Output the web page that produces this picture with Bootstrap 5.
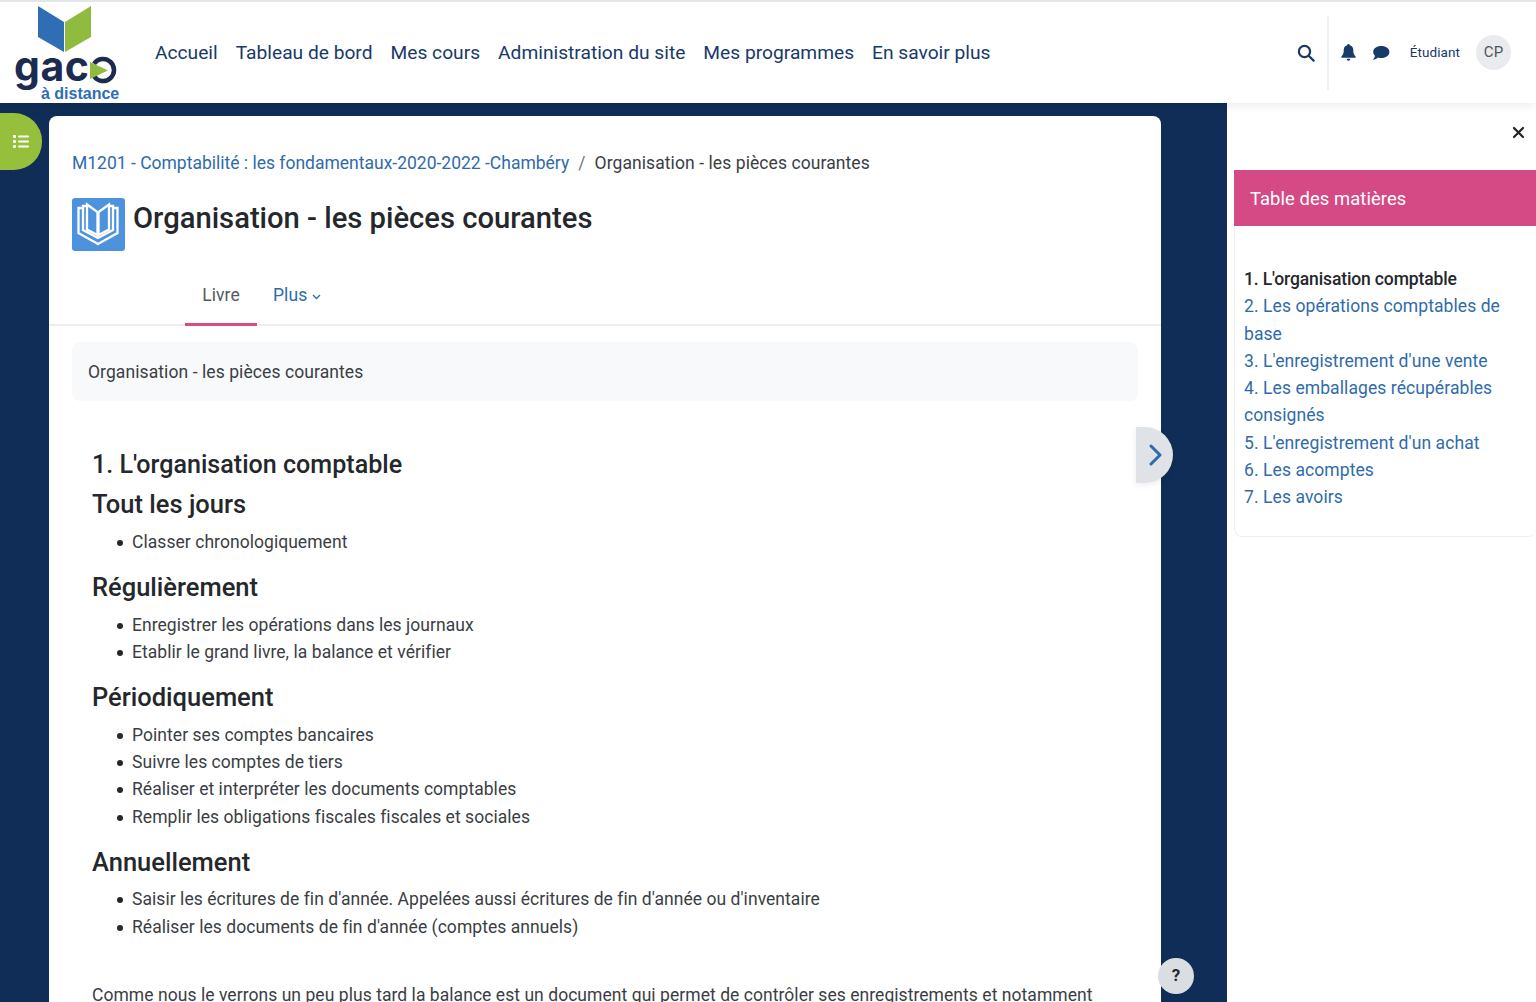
<!DOCTYPE html>
<html lang="fr">
<head>
  <meta charset="UTF-8">
  <meta name="viewport" content="width=device-width, initial-scale=1.0">
  <title>Organisation - les pièces courantes</title>
  <link href="https://cdn.jsdelivr.net/npm/bootstrap@5.3.0/dist/css/bootstrap.min.css" rel="stylesheet">
  <script src="https://cdn.jsdelivr.net/npm/bootstrap@5.3.0/dist/js/bootstrap.bundle.min.js"></script>
  <style>
    html, body { height: 1002px; overflow: hidden; }
    body { font-family: Roboto, "Liberation Sans", sans-serif; font-size: 17.5px; line-height: 27.3px; letter-spacing: .08px; color: #3a3e44; background: #0f2d56; }
    a { text-decoration: none; color: #2f6bab; }
    .top-bar { height: 103px; background: #fff; border-top: 2px solid #e3e5e7; padding-left: 14px; padding-right: 25px; position: relative; z-index: 2; box-shadow: 0 2px 10px rgba(0,0,0,.09); }
    .brand-logo { width: 106px; height: 100px; flex: none; }
    .brand-name { font-family: Inter, sans-serif; font-size: 41px; font-weight: 700; fill: #1b2c50; letter-spacing: .5px; }
    .brand-sub { font-family: "Liberation Sans", sans-serif; font-size: 16px; font-weight: 700; fill: #2f6db5; letter-spacing: 0; }
    .main-links { gap: 18px; margin-left: 35px; margin-top: 1px; letter-spacing: 0; }
    .main-links a { color: #173a69; font-size: 19.2px; white-space: nowrap; }
    .tool-divider { width: 2px; height: 74px; background: #eff0f1; margin: 0 12px 0 12px; }
    .role-label { font-size: 13.5px; color: #173a69; margin-left: 20px; margin-right: 16px; }
    .user-circle { width: 35px; height: 35px; border-radius: 50%; background: #e9ebee; color: #50555b; font-size: 15px; }
    .page-body { height: 899px; position: relative; padding-top: 13px; }
    .course-card { width: 1112px; margin-left: 49px; height: 900px; background: #fff; border-radius: 8px 8px 0 0; overflow: hidden; }
    .crumb-row { padding: 34px 23px 0; }
    .crumb-row a { letter-spacing: 0; }
    .crumb-sep { color: #6c757d; margin: 0 9px; }
    .title-row { padding: 21px 23px 0; gap: 8px; }
    .book-tile { width: 53px; height: 53px; flex: none; }
    .page-title { font-size: 29.2px; font-weight: 500; line-height: 40px; margin: 0; color: #24272b; letter-spacing: 0; }
    .tab-line { margin-top: 25px; padding-left: 136px; height: 50px; border-bottom: 2px solid #eceeef; }
    .tab-item { display: block; padding: 0 16px; height: 50px; line-height: 38px; }
    .tab-active { color: #55595e; border-bottom: 3px solid #d94b87; width: 72px; padding: 0; text-align: center; }
    .chapter-strip { margin: 16px 23px 0; height: 59px; line-height: 61px; padding-left: 16px; background: #f8f9fa; border-radius: 8px; }
    .chapter-body { padding: 44px 43px 0; letter-spacing: .05px; }
    .chapter-title { font-size: 25.100px; font-weight: 500; line-height: 40px; margin: 0; color: #24272b; letter-spacing: 0; }
    .chapter-sub { font-size: 25.500px; font-weight: 500; line-height: 32px; margin: 3px 0 8.500px; color: #24272b; letter-spacing: 0; }
    .chapter-list { list-style: none; margin: 0 0 15px; padding-left: 40px; }
    .chapter-list li { position: relative; }
    .chapter-list li::before { content: ""; position: absolute; left: -15.500px; top: 11px; width: 6px; height: 6px; border-radius: 50%; background: #24272b; }
    .chapter-note { margin-top: 41px; white-space: nowrap; }
    .next-tab { position: absolute; left: 1136px; top: 324px; width: 37px; height: 56px; background: #dfe2e6; border-radius: 0 28px 28px 0; box-shadow: 0 2px 6px rgba(0,0,0,.08); }
    .side-tab { position: absolute; left: 0; top: 10px; width: 42px; height: 57px; background: #96bf3c; border-radius: 0 28px 28px 0; }
    .help-btn { position: absolute; left: 1158px; top: 855px; width: 36px; height: 36px; border-radius: 50%; background: #dadde1; color: #24272b; font-weight: 700; font-size: 17px; }
    .toc-drawer { position: absolute; left: 1227px; top: 0; width: 309px; height: 899px; background: #fff; }
    .close-row { height: 67px; padding: 23px 11px 0 0; }
    .toc-panel { margin-left: 7px; height: 367px; border: 1px solid #eceeef; border-right: 0; border-radius: 0 0 8px 8px; }
    .toc-head { height: 56px; line-height: 58px; padding-left: 16px; margin: -1px 0 0 -1px; background: #d54a85; color: #fff; font-size: 18.400px; }
    .toc-list { list-style: none; margin: 0; padding: 40px 9px 0; }
    .toc-current { font-weight: 500; color: #24272b; letter-spacing: -.13px; }
  </style>
</head>
<body>
  <header class="top-bar d-flex align-items-center">
    <svg class="brand-logo" viewBox="0 0 106 100">
      <path d="M24 3 50 19V49L24 34Z" fill="#2f6db5"/>
      <path d="M77 3 51 19V49L77 34Z" fill="#8fbb3f"/>
      <text class="brand-name" x="0" y="78">gac</text>
      <path d="M80 60.700A11 11 0 1 1 80 73.300" fill="none" stroke="#1b2c50" stroke-width="4.500"/>
      <path d="M76 59 94 67.500 76 76Z" fill="#8fbb3f"/>
      <text class="brand-sub" x="27" y="95.500">à distance</text>
    </svg>
    <nav class="main-links d-flex">
      <a href="#">Accueil</a>
      <a href="#">Tableau de bord</a>
      <a href="#">Mes cours</a>
      <a href="#">Administration du site</a>
      <a href="#">Mes programmes</a>
      <a href="#">En savoir plus</a>
    </nav>
    <div class="ms-auto d-flex align-items-center">
      <svg width="18" height="18" viewBox="0 0 18 18" fill="none" stroke="#173a69" stroke-width="2.200"><circle cx="7.500" cy="7.500" r="5.600"/><path d="M11.700 11.700 16.600 16.600" stroke-linecap="round"/></svg>
      <div class="tool-divider"></div>
      <svg width="15" height="17" viewBox="0 0 15 17" fill="#173a69"><path d="M7.500 0C8.300 0 8.800.6 8.800 1.300 11.300 1.900 12.300 3.900 12.300 6.600 12.300 10 13.100 11 14.600 12.600V13.800H.4V12.600C1.900 11 2.700 10 2.700 6.600 2.700 3.900 3.700 1.900 6.200 1.300 6.200.6 6.700 0 7.500 0Z"/><path d="M5.600 14.800H9.400A1.900 1.900 0 0 1 5.600 14.800Z"/></svg>
      <svg class="ms-3" width="18" height="16" viewBox="0 0 18 16" fill="#173a69"><path d="M9.300 1C14 1 17.400 3.500 17.400 7 17.400 10.500 14 13 9.300 13 8.200 13 7.200 12.900 6.200 12.500 4.900 13.700 3 14.600.8 14.600 2 13.500 2.800 12.200 3 10.800 1.900 9.700 1.200 8.400 1.200 7 1.200 3.500 4.600 1 9.300 1Z"/></svg>
      <span class="role-label">Étudiant</span>
      <span class="user-circle d-flex align-items-center justify-content-center">CP</span>
    </div>
  </header>

  <div class="page-body">
    <main class="course-card">
      <div class="crumb-row d-flex">
        <a href="#">M1201 - Comptabilité : les fondamentaux-2020-2022 -Chambéry</a>
        <span class="crumb-sep">/</span>
        <span>Organisation - les pièces courantes</span>
      </div>
      <div class="title-row d-flex">
        <svg class="book-tile" viewBox="0 0 53 53">
          <rect width="53" height="53" rx="3" fill="#4d92dc"/>
          <g fill="none" stroke="#fff" stroke-width="2.300" stroke-linejoin="miter">
            <path d="M11 10 6.500 10V35L26 46 45.500 35V10L41 10"/>
            <path d="M16 8 11 8V32L26 40 41 32V8L36 8"/>
            <path d="M15 6.500 25.500 14V37L15 31.500Z"/>
            <path d="M37 6.500 26.500 14V37L37 31.500Z"/>
          </g>
        </svg>
        <h1 class="page-title">Organisation - les pièces courantes</h1>
      </div>
      <div class="tab-line d-flex">
        <a class="tab-item tab-active" href="#">Livre</a>
        <a class="tab-item" href="#">Plus <svg width="9" height="6" viewBox="0 0 9 6" fill="none" stroke="#2f6bab" stroke-width="1.300"><path d="M1 1 4.500 4.500 8 1"/></svg></a>
      </div>
      <div class="chapter-strip">Organisation - les pièces courantes</div>
      <div class="chapter-body">
        <h2 class="chapter-title">1. L'organisation comptable</h2>
        <h3 class="chapter-sub">Tout les jours</h3>
        <ul class="chapter-list">
          <li>Classer chronologiquement</li>
        </ul>
        <h3 class="chapter-sub">Régulièrement</h3>
        <ul class="chapter-list">
          <li>Enregistrer les opérations dans les journaux</li>
          <li>Etablir le grand livre, la balance et vérifier</li>
        </ul>
        <h3 class="chapter-sub">Périodiquement</h3>
        <ul class="chapter-list">
          <li>Pointer ses comptes bancaires</li>
          <li>Suivre les comptes de tiers</li>
          <li>Réaliser et interpréter les documents comptables</li>
          <li>Remplir les obligations fiscales fiscales et sociales</li>
        </ul>
        <h3 class="chapter-sub">Annuellement</h3>
        <ul class="chapter-list">
          <li>Saisir les écritures de fin d'année. Appelées aussi écritures de fin d'année ou d'inventaire</li>
          <li>Réaliser les documents de fin d'année (comptes annuels)</li>
        </ul>
        <p class="chapter-note">Comme nous le verrons un peu plus tard la balance est un document qui permet de contrôler ses enregistrements et notamment</p>
      </div>
    </main>

    <a class="side-tab d-flex align-items-center justify-content-center" href="#">
      <svg width="16" height="13" viewBox="0 0 16 13" fill="#fff"><rect y="0" width="3" height="3" rx="1"/><rect y="5" width="3" height="3" rx="1"/><rect y="10" width="3" height="3" rx="1"/><rect x="5" y=".5" width="11" height="2" rx="1"/><rect x="5" y="5.500" width="11" height="2" rx="1"/><rect x="5" y="10.500" width="11" height="2" rx="1"/></svg>
    </a>
    <a class="next-tab d-flex align-items-center justify-content-center" href="#">
      <svg width="14" height="22" viewBox="0 0 14 22" fill="none" stroke="#2f6bab" stroke-width="3" stroke-linecap="round" stroke-linejoin="round"><path d="M3 2 12 11 3 20"/></svg>
    </a>

    <aside class="toc-drawer">
      <div class="close-row d-flex justify-content-end">
        <svg width="13" height="13" viewBox="0 0 13 13" stroke="#1f2226" stroke-width="2.200" stroke-linecap="round"><path d="M2 2 11 11M11 2 2 11"/></svg>
      </div>
      <div class="toc-panel">
        <div class="toc-head">Table des matières</div>
        <ul class="toc-list">
          <li class="toc-current">1. L'organisation comptable</li>
          <li><a href="#">2. Les opérations comptables de base</a></li>
          <li><a href="#">3. L'enregistrement d'une vente</a></li>
          <li><a href="#">4. Les emballages récupérables consignés</a></li>
          <li><a href="#">5. L'enregistrement d'un achat</a></li>
          <li><a href="#">6. Les acomptes</a></li>
          <li><a href="#">7. Les avoirs</a></li>
        </ul>
      </div>
    </aside>

    <a class="help-btn d-flex align-items-center justify-content-center" href="#">?</a>
  </div>
</body>
</html>
